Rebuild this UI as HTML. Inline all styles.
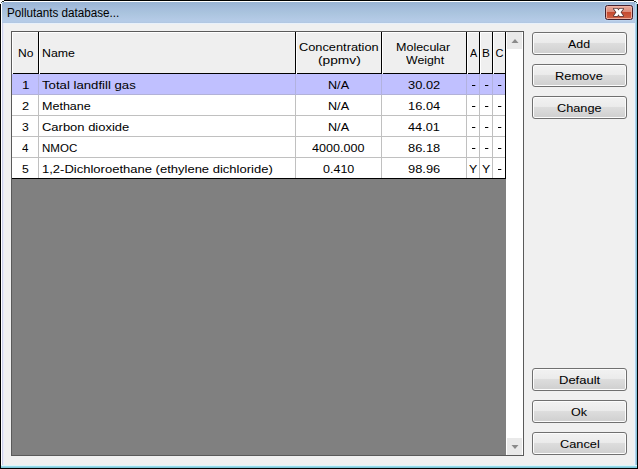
<!DOCTYPE html>
<html><head><meta charset="utf-8">
<style>
html,body{margin:0;padding:0;}
body{width:638px;height:469px;overflow:hidden;background:#fff;position:relative;font-family:"Liberation Sans",sans-serif;font-size:11px;color:#000;}
body div{position:absolute;}
#frame{left:0;top:0;width:638px;height:469px;background:#000;}
#white{left:1px;top:1px;width:636px;height:467px;background:#fff;}
#blue{left:2px;top:2px;width:634px;height:466px;background:#ccd0e8;}
#titlebar{left:2px;top:2px;width:634px;height:21px;background:linear-gradient(#99b4d4,#a5bddc 30%,#aac4de 52%,#b5cbe7 88%,#b5cbe6 95%,#b0c5df);}
.px{width:1px;height:1px;}
#client{left:3px;top:23px;width:631px;height:442px;background:#f0f0f0;border-left:1px solid #e8eafa;border-top:1px solid #e8f1fb;box-sizing:border-box;}
#re1{left:634px;top:23px;width:1px;height:443px;background:#e8f2fe;}
#re2{left:635px;top:2px;width:1px;height:466px;background:#b5d3e6;}
#re3{left:636px;top:2px;width:1px;height:466px;background:#86c0da;}
#be1{left:1px;top:465px;width:636px;height:1px;background:#dff5fa;}
#be2{left:1px;top:466px;width:636px;height:1px;background:#96dae8;}
#be3{left:1px;top:467px;width:636px;height:1px;background:#7fc5d8;}
#close{left:605px;top:5px;width:28px;height:15px;box-sizing:border-box;border:1px solid #45202c;border-radius:2.5px;background:linear-gradient(#e9a99b 0%,#dc8a78 46%,#c74a30 50%,#d0654a 100%);box-shadow:0 0 0 1px rgba(240,180,165,.9) inset,0 0 1px 1px rgba(200,218,240,.55);}
#grid{left:11px;top:31px;width:513px;height:425px;background:#808080;border:1px solid #5a5a5a;box-sizing:border-box;}
#sb{left:506px;top:32px;width:17px;height:423px;background:#fff;}
.sbb{left:507px;width:15px;height:17px;background:#e9e9e9;}
.hc{top:32px;height:42px;box-sizing:border-box;background:#efefef;border-left:1px solid #fff;border-top:1px solid #fff;}
.hc:after{content:"";position:absolute;left:0;right:0;bottom:0;height:1px;background:#000;}
.hc:before{content:"";position:absolute;right:0;top:-1px;bottom:0;width:1px;background:#000;}
.row{left:12px;width:493px;height:20px;background:#fff;border-bottom:1px solid #c0c0c0;}
.row.sel{background:#c0c0ff;border-bottom-color:#b2b2d8;}
.vd{top:74px;width:1px;height:104px;background:#c0c0c0;}
.vds{top:74px;width:1px;height:21px;background:#b2b2de;}
.dash{width:3px;height:1px;background:#000;box-shadow:1px 0 0 rgba(0,0,0,.3);}
.t{white-space:nowrap;transform-origin:0 0;color:#000;}
.btn{left:532px;width:95px;height:23px;box-sizing:border-box;border:1px solid #707070;border-radius:3px;background:linear-gradient(#f2f2f2 0%,#ebebeb 45%,#dddddd 50%,#cfcfcf 100%);box-shadow:0 0 0 1px #fcfcfc inset;}
</style></head><body>
<div id="frame"></div>
<div id="white"></div>
<div id="blue"></div>
<div id="titlebar"></div>
<div id="client"></div>
<div id="re1"></div><div id="re2"></div><div id="re3"></div><div id="be1"></div><div id="be2"></div><div id="be3"></div>
<div class="px" style="left:0px;top:0px;width:4px;height:1px;background:#fff"></div><div class="px" style="left:0px;top:1px;width:2px;height:1px;background:#fff"></div><div class="px" style="left:2px;top:1px;width:2px;height:1px;background:#243028"></div><div class="px" style="left:0px;top:2px;width:1px;height:2px;background:#fff"></div><div class="px" style="left:1px;top:2px;width:1px;height:1px;background:#586878"></div><div class="px" style="left:2px;top:2px;width:1px;height:1px;background:#d8ecf8"></div><div class="px" style="left:1px;top:3px;width:1px;height:1px;background:#fff"></div><div class="px" style="left:634px;top:0px;width:4px;height:1px;background:#fff"></div><div class="px" style="left:636px;top:1px;width:2px;height:1px;background:#fff"></div><div class="px" style="left:634px;top:1px;width:2px;height:1px;background:#243028"></div><div class="px" style="left:637px;top:2px;width:1px;height:2px;background:#fff"></div><div class="px" style="left:636px;top:2px;width:1px;height:1px;background:#586878"></div><div class="px" style="left:635px;top:2px;width:1px;height:1px;background:#d8ecf8"></div><div class="px" style="left:636px;top:3px;width:1px;height:1px;background:#c8e8f0"></div>
<div id="close"><svg width="26" height="13" style="display:block"><path d="M7.8 2.7 L11.4 2.7 L12.5 4.4 L13.6 2.7 L17.2 2.7 L14.6 6.35 L17.2 10 L13.6 10 L12.5 8.3 L11.4 10 L7.8 10 L10.4 6.35 Z" fill="#fff" stroke="#5a3838" stroke-width="1.6" stroke-linejoin="round" paint-order="stroke"/></svg></div>
<div id="grid"></div>
<div id="sb"></div>
<div class="sbb" style="top:32px"><svg width="15" height="17" style="display:block"><path d="M4.5 11 L8 7 L11.5 11 Z" fill="#8a8a8a"/></svg></div>
<div class="sbb" style="top:438px"><svg width="15" height="17" style="display:block"><path d="M4.5 7 L8 11 L11.5 7 Z" fill="#8a8a8a"/></svg></div>
<div class="hc" style="left:12px;width:27px"></div>
<div class="hc" style="left:39px;width:257px"></div>
<div class="hc" style="left:296px;width:86px"></div>
<div class="hc" style="left:382px;width:85px"></div>
<div class="hc" style="left:467px;width:13px"></div>
<div class="hc" style="left:480px;width:13px"></div>
<div class="hc" style="left:493px;width:13px"></div>
<div class="row sel" style="top:74px"></div>
<div class="row" style="top:95px"></div>
<div class="row" style="top:116px"></div>
<div class="row" style="top:137px"></div>
<div class="row" style="top:158px"></div>
<div class="vd" style="left:38px"></div><div class="vds" style="left:38px"></div>
<div class="vd" style="left:295px"></div><div class="vds" style="left:295px"></div>
<div class="vd" style="left:381px"></div><div class="vds" style="left:381px"></div>
<div class="vd" style="left:466px"></div><div class="vds" style="left:466px"></div>
<div class="vd" style="left:479px"></div><div class="vds" style="left:479px"></div>
<div class="vd" style="left:492px"></div><div class="vds" style="left:492px"></div>
<div style="left:505px;top:32px;width:1px;height:147px;background:#000"></div>
<div style="left:12px;top:178px;width:494px;height:1px;background:#000"></div>
<div class="dash" style="left:472px;top:85px"></div>
<div class="dash" style="left:485px;top:85px"></div>
<div class="dash" style="left:498px;top:85px"></div>
<div class="dash" style="left:472px;top:106px"></div>
<div class="dash" style="left:485px;top:106px"></div>
<div class="dash" style="left:498px;top:106px"></div>
<div class="dash" style="left:472px;top:127px"></div>
<div class="dash" style="left:485px;top:127px"></div>
<div class="dash" style="left:498px;top:127px"></div>
<div class="dash" style="left:472px;top:148px"></div>
<div class="dash" style="left:485px;top:148px"></div>
<div class="dash" style="left:498px;top:148px"></div>
<div class="dash" style="left:498px;top:169px"></div>
<div class="btn" style="top:32px"></div>
<div class="btn" style="top:64px"></div>
<div class="btn" style="top:96px"></div>
<div class="btn" style="top:368px"></div>
<div class="btn" style="top:400px"></div>
<div class="btn" style="top:432px"></div>
<div class="t" style="left:7.23px;top:7px;font-size:12px;line-height:12px;transform:scaleX(0.9731)">Pollutants database...</div>
<div class="t" style="left:17.50px;top:48px;font-size:11px;line-height:11px;transform:scaleX(1.0960)">No</div>
<div class="t" style="left:41.98px;top:48px;font-size:11px;line-height:11px;transform:scaleX(1.1214)">Name</div>
<div class="t" style="left:299.42px;top:42px;font-size:11px;line-height:11px;transform:scaleX(1.1628)">Concentration</div>
<div class="t" style="left:317.86px;top:55px;font-size:11px;line-height:11px;transform:scaleX(1.2489)">(ppmv)</div>
<div class="t" style="left:396.46px;top:42px;font-size:11px;line-height:11px;transform:scaleX(1.1376)">Molecular</div>
<div class="t" style="left:405.70px;top:55px;font-size:11px;line-height:11px;transform:scaleX(1.1206)">Weight</div>
<div class="t" style="left:469.90px;top:48px;font-size:11px;line-height:11px;transform:scaleX(0.9793)">A</div>
<div class="t" style="left:482.12px;top:48px;font-size:11px;line-height:11px;transform:scaleX(1.0783)">B</div>
<div class="t" style="left:495.50px;top:48px;font-size:11px;line-height:11px;transform:scaleX(1.0000)">C</div>
<div class="t" style="left:21.68px;top:80px;font-size:11px;line-height:11px;transform:scaleX(1.2211)">1</div>
<div class="t" style="left:42.10px;top:80px;font-size:11px;line-height:11px;transform:scaleX(1.1974)">Total landfill gas</div>
<div class="t" style="left:327.85px;top:80px;font-size:11px;line-height:11px;transform:scaleX(1.1478)">N/A</div>
<div class="t" style="left:408.02px;top:80px;font-size:11px;line-height:11px;transform:scaleX(1.1698)">30.02</div>
<div class="t" style="left:22.02px;top:101px;font-size:11px;line-height:11px;transform:scaleX(1.1600)">2</div>
<div class="t" style="left:41.86px;top:101px;font-size:11px;line-height:11px;transform:scaleX(1.1394)">Methane</div>
<div class="t" style="left:327.85px;top:101px;font-size:11px;line-height:11px;transform:scaleX(1.1478)">N/A</div>
<div class="t" style="left:407.72px;top:101px;font-size:11px;line-height:11px;transform:scaleX(1.1698)">16.04</div>
<div class="t" style="left:22.05px;top:122px;font-size:11px;line-height:11px;transform:scaleX(1.1048)">3</div>
<div class="t" style="left:42.21px;top:122px;font-size:11px;line-height:11px;transform:scaleX(1.1795)">Carbon dioxide</div>
<div class="t" style="left:327.85px;top:122px;font-size:11px;line-height:11px;transform:scaleX(1.1478)">N/A</div>
<div class="t" style="left:408.31px;top:122px;font-size:11px;line-height:11px;transform:scaleX(1.1589)">44.01</div>
<div class="t" style="left:22.34px;top:143px;font-size:11px;line-height:11px;transform:scaleX(1.0545)">4</div>
<div class="t" style="left:41.85px;top:143px;font-size:11px;line-height:11px;transform:scaleX(1.0481)">NMOC</div>
<div class="t" style="left:312.21px;top:143px;font-size:11px;line-height:11px;transform:scaleX(1.1425)">4000.000</div>
<div class="t" style="left:408.02px;top:143px;font-size:11px;line-height:11px;transform:scaleX(1.1698)">86.18</div>
<div class="t" style="left:22.05px;top:164px;font-size:11px;line-height:11px;transform:scaleX(1.1048)">5</div>
<div class="t" style="left:42.31px;top:164px;font-size:11px;line-height:11px;transform:scaleX(1.1830)">1,2-Dichloroethane (ethylene dichloride)</div>
<div class="t" style="left:323.13px;top:164px;font-size:11px;line-height:11px;transform:scaleX(1.1364)">0.410</div>
<div class="t" style="left:408.02px;top:164px;font-size:11px;line-height:11px;transform:scaleX(1.1698)">98.96</div>
<div class="t" style="left:469.44px;top:164px;font-size:11px;line-height:11px;transform:scaleX(1.1231)">Y</div>
<div class="t" style="left:482.24px;top:164px;font-size:11px;line-height:11px;transform:scaleX(1.1231)">Y</div>
<div class="t" style="left:568.30px;top:39px;font-size:11px;line-height:11px;transform:scaleX(1.1253)">Add</div>
<div class="t" style="left:555.43px;top:71px;font-size:11px;line-height:11px;transform:scaleX(1.1671)">Remove</div>
<div class="t" style="left:557.12px;top:103px;font-size:11px;line-height:11px;transform:scaleX(1.1573)">Change</div>
<div class="t" style="left:558.52px;top:375px;font-size:11px;line-height:11px;transform:scaleX(1.1822)">Default</div>
<div class="t" style="left:571.03px;top:407px;font-size:11px;line-height:11px;transform:scaleX(1.1407)">Ok</div>
<div class="t" style="left:559.72px;top:439px;font-size:11px;line-height:11px;transform:scaleX(1.1606)">Cancel</div>
</body></html>
